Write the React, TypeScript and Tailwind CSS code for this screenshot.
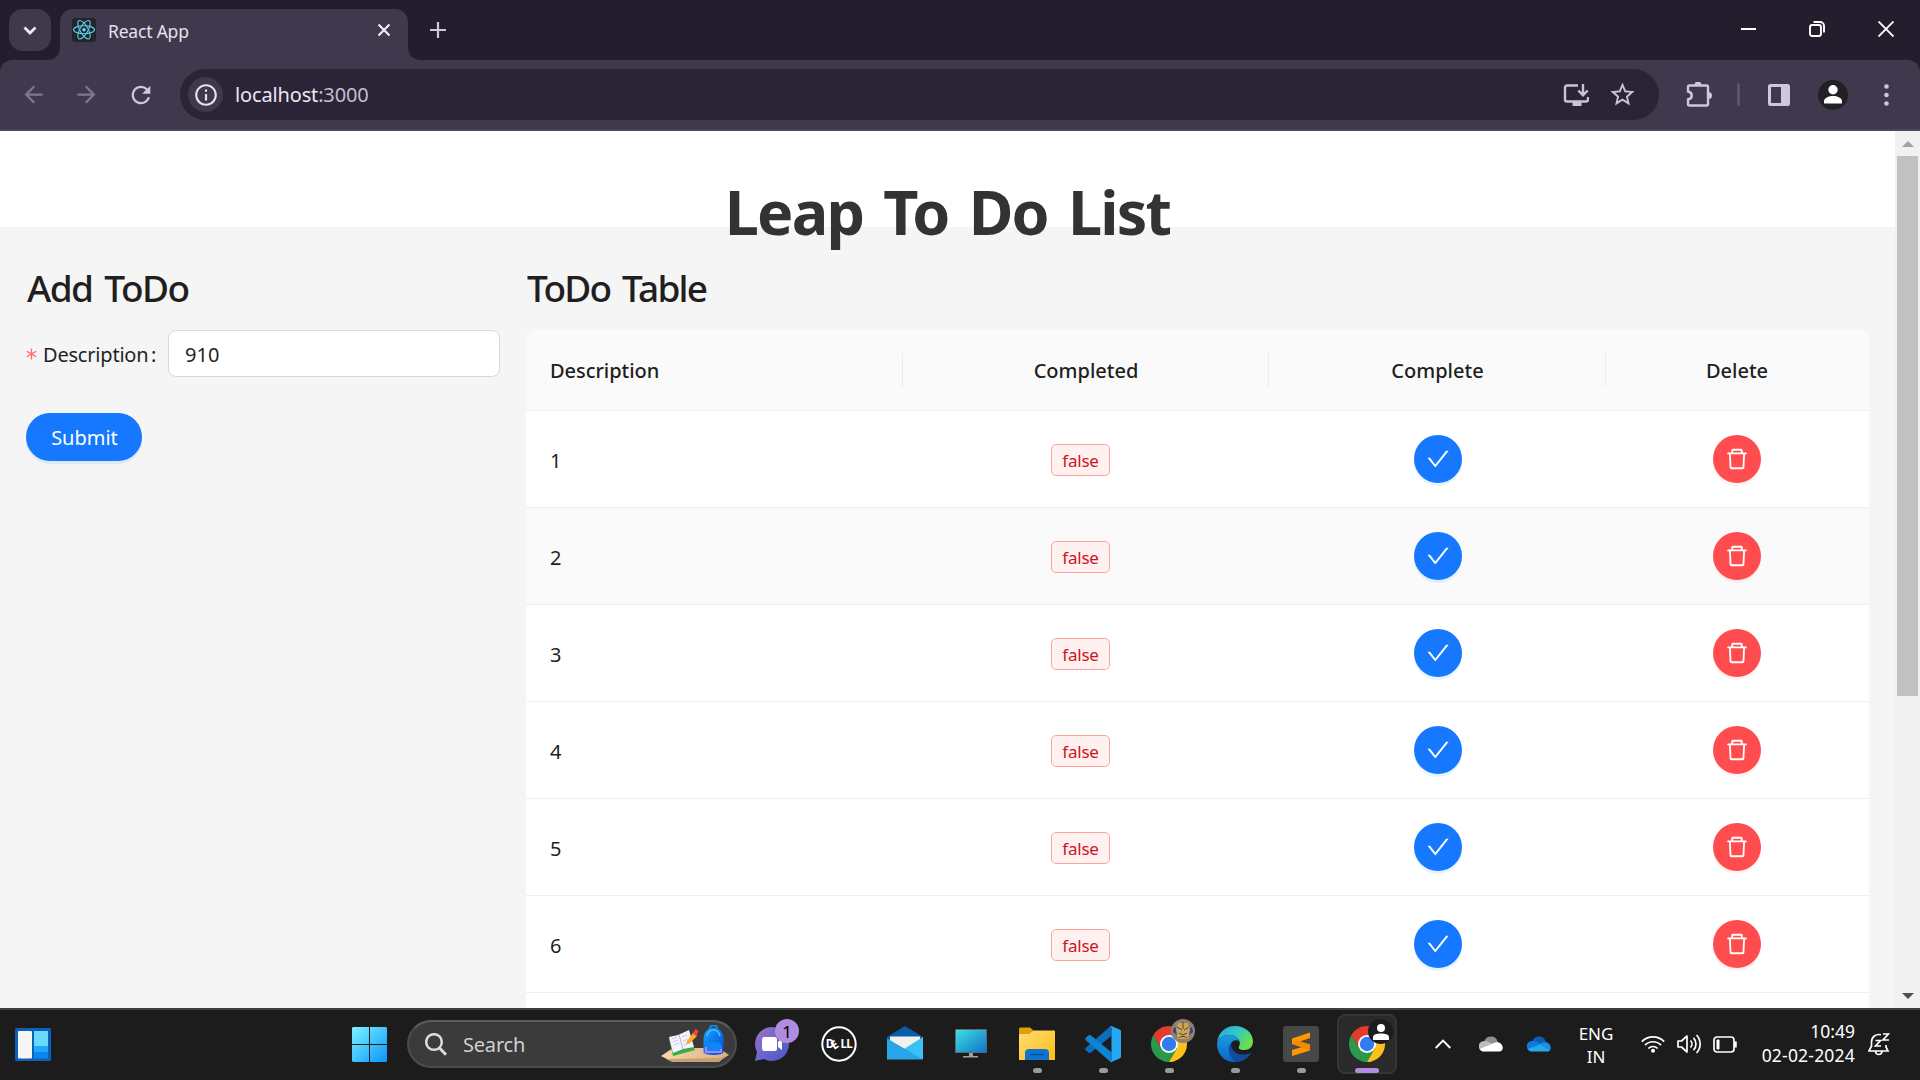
import type { ReactNode } from "react";
import { AiOutlineCheck, AiOutlineDelete } from "react-icons/ai";
import { MdArrowBack, MdArrowForward, MdInfoOutline, MdRefresh, MdStarBorder } from "react-icons/md";

const todos = ["1", "2", "3", "4", "5", "6"];

function TabStrip() {
  return (
    <div className="flex h-[60px] shrink-0 items-start bg-[#241d2e] pl-[9px] pt-[9px]">
      <div className="flex size-[42px] items-center justify-center rounded-[14px] bg-[#40384c]">
        <svg width="14" height="9" viewBox="0 0 14 9" fill="none" stroke="#eee8f4" strokeWidth="2.8">
          <path d="M1.5 1.5 7 7l5.500-5.500" />
        </svg>
      </div>
      <div className="relative ml-[9px] flex h-[51px] w-[348px] items-center rounded-t-[13px] bg-[#40384c] pb-[9px] pl-3 pr-[17px]">
        <svg className="absolute -left-[13px] bottom-0" width="13" height="13" viewBox="0 0 13 13">
          <path d="M13 0v13H0C8 13 13 8 13 0Z" fill="#40384c" />
        </svg>
        <svg className="absolute -right-[13px] bottom-0" width="13" height="13" viewBox="0 0 13 13">
          <path d="M0 0v13h13C5 13 0 8 0 0Z" fill="#40384c" />
        </svg>
        <svg width="24" height="24" viewBox="0 0 24 24" fill="none" stroke="#5ccfee" strokeWidth="1.100">
          <rect width="24" height="24" rx="3" fill="#22262b" stroke="none" />
          <circle cx="12" cy="11.700" r="1.800" fill="#61dafb" stroke="none" />
          <ellipse cx="12" cy="11.700" rx="10.400" ry="4" />
          <ellipse cx="12" cy="11.700" rx="10.400" ry="4" transform="rotate(60 12 11.700)" />
          <ellipse cx="12" cy="11.700" rx="10.400" ry="4" transform="rotate(120 12 11.700)" />
        </svg>
        <span className="ml-[12px] mt-[2px] flex-1 text-[17.5px] leading-6 tracking-[-0.2px] text-[#e6e0ec]">React App</span>
        <svg width="14" height="14" viewBox="0 0 14 14" stroke="#f0eaf5" strokeWidth="2.200">
          <path d="m1.500 1.500 11 11M12.500 1.500l-11 11" />
        </svg>
      </div>
      <svg className="ml-[22px] mt-[13px]" width="16" height="16" viewBox="0 0 16 16" stroke="#d2c5e0" strokeWidth="2.200">
        <path d="M8 0v16M0 8h16" />
      </svg>
      <div className="ml-auto flex items-center gap-[53px] pr-[26px] pt-[12px]">
        <div className="h-[2px] w-[15px] bg-white" />
        <svg width="16" height="16" viewBox="0 0 16 16" fill="none" stroke="#fff" strokeWidth="1.900">
          <rect x="1" y="4" width="11" height="11" rx="2.200" />
          <path d="M4.500 1h6.500a4 4 0 0 1 4 4v6.500" />
        </svg>
        <svg width="16" height="16" viewBox="0 0 16 16" stroke="#fff" strokeWidth="1.900">
          <path d="m.5.500 15 15M15.500.500l-15 15" />
        </svg>
      </div>
    </div>
  );
}

function Toolbar() {
  return (
    <div className="flex h-[71px] shrink-0 bg-[#241d2e]">
      <div className="flex flex-1 items-center rounded-t-[12px] border-b-2 border-[#4d4757] bg-[#40384c] pl-[20px]">
        <MdArrowBack className="size-[27px] text-[#7f778b]" />
        <MdArrowForward className="ml-[26px] size-[27px] text-[#7f778b]" />
        <MdRefresh className="ml-[27px] size-[28px] text-[#d2c5e0]" />
        <div className="ml-[25px] flex h-[51px] w-[1479px] items-center rounded-full bg-[#2b2436] pl-2 pr-[21px]">
          <div className="flex size-[35px] items-center justify-center rounded-full bg-[#40384c]">
            <MdInfoOutline className="size-[26px] text-[#e8e0ef]" />
          </div>
          <span className="ml-[12px] flex-1 text-[20px] leading-6 tracking-[-0.15px] text-[#ece6f2]">
            localhost<span className="text-[#c5bdcd]">:3000</span>
          </span>
          <svg width="26" height="22" viewBox="0 0 26 22" fill="none" stroke="#cbc3cf" strokeWidth="2.400">
            <path d="M15 1.500H4a2 2 0 0 0-2 2v12a2 2 0 0 0 2 2h19a2 2 0 0 0 2-2v-2.500M20 0v10.500M15.300 6.500l4.700 4.700 4.700-4.700" />
            <path d="M9.500 20h9" strokeWidth="4" />
          </svg>
          <MdStarBorder className="ml-[19px] mr-px size-[29px] text-[#cbc3cf]" />
        </div>
        <svg className="ml-[27px]" width="26" height="26" viewBox="0 0 26 26" fill="none" stroke="#d2c5e0" strokeWidth="2.400">
          <g transform="translate(0 -1)">
            <path d="M3.500 4.500h17a1.500 1.500 0 0 1 1.500 1.500v17a1.500 1.500 0 0 1-1.500 1.500h-17A1.500 1.500 0 0 1 2 23v-4.500c5-1 5-7 0-8V6a1.500 1.500 0 0 1 1.500-1.500Z" />
            <path d="M8.500 4a3.500 3.500 0 0 1 7 0ZM22.500 11a3.500 3.500 0 0 1 0 7Z" fill="#d2c5e0" stroke="none" />
          </g>
        </svg>
        <div className="ml-[25px] h-[23px] w-[3px] rounded-full bg-[#5c5469]" />
        <svg className="ml-[28px]" width="22" height="22" viewBox="0 0 22 22">
          <path fillRule="evenodd" fill="#d2c5e0" d="M2.500 0h17A2.500 2.500 0 0 1 22 2.500v17a2.500 2.500 0 0 1-2.500 2.500h-17A2.500 2.500 0 0 1 0 19.500v-17A2.500 2.500 0 0 1 2.500 0ZM3 3v16h10V3Z" />
        </svg>
        <div className="ml-[28px] flex size-[30px] items-center justify-center rounded-full bg-[#202124]">
          <svg width="18" height="19" viewBox="0 0 18 19" fill="#fff">
            <circle cx="9" cy="4.800" r="4.700" />
            <path d="M0 18.500v-2.500c0-3 5-5 9-5s9 2 9 5v2.500Z" />
          </svg>
        </div>
        <svg className="ml-[36px]" width="5" height="22" viewBox="0 0 5 22" fill="#d2c5e0">
          <circle cx="2.500" cy="2.500" r="2.300" />
          <circle cx="2.500" cy="11" r="2.300" />
          <circle cx="2.500" cy="19.500" r="2.300" />
        </svg>
      </div>
    </div>
  );
}

function AddTodo() {
  return (
    <section className="w-[474px] shrink-0">
      <h2 className="mb-[20px] pl-px text-[37px] font-medium leading-[45px] tracking-[-1.6px] [word-spacing:4px]">Add ToDo</h2>
      <div className="flex items-center">
        <svg className="mt-px" width="11" height="12" viewBox="0 0 11 12" stroke="#ff6b6d" strokeWidth="1.300">
          <path d="M5.500.500v11M.7 3.200l9.600 5.600M10.300 3.200.7 8.800" />
        </svg>
        <label className="ml-[6px] mt-[2px] w-[108px] text-[20px] leading-6 tracking-[-0.2px]">Description</label>
        <span className="mt-[2px] w-[17px] text-[20px] leading-6">:</span>
        <input
          defaultValue="910"
          className="h-[47px] w-0 flex-1 rounded-lg border border-[#d9d9d9] bg-white px-4 pt-[2px] text-[20px] leading-6 outline-none"
        />
      </div>
      <button className="mt-9 h-12 w-[116px] rounded-full bg-[#1677ff] pl-px pt-[2px] text-[20px] leading-6 text-white shadow-[0_3px_0_rgba(5,145,255,0.1)]">
        Submit
      </button>
    </section>
  );
}

function HeadCell({ children }: { children: ReactNode }) {
  return (
    <div className="flex items-center">
      <span className="flex-1 pl-px pt-[2px] text-center">{children}</span>
      <i className="h-[34px] w-px bg-[#ececec]" />
    </div>
  );
}

function TodoTable() {
  return (
    <section className="w-[1343px] shrink-0">
      <h2 className="mb-[19px] pl-px text-[37px] font-medium leading-[45px] tracking-[-1.8px] [word-spacing:4px]">ToDo Table</h2>
      <div className="overflow-hidden rounded-t-[10px] bg-white">
        <div className="grid h-[82px] grid-cols-[377px_366px_337px_262px] border-b border-[#f0f0f0] bg-[#fafafa] text-[20px] font-medium leading-6">
          <div className="flex items-center">
            <span className="flex-1 pl-6 pt-[2px] tracking-[-0.05px]">Description</span>
            <i className="h-[34px] w-px bg-[#ececec]" />
          </div>
          <HeadCell>Completed</HeadCell>
          <HeadCell>Complete</HeadCell>
          <span className="self-center pt-[2px] text-center">Delete</span>
        </div>
        {todos.map((todo, i) => (
          <div
            key={todo}
            className={
              "grid h-[97px] grid-cols-[377px_366px_337px_261px] items-center border-b border-[#f0f0f0] " +
              (i === 1 ? "bg-[#fafafa]" : "bg-white")
            }
          >
            <span className="pl-[24px] pt-[3px] text-[20px] leading-6">{todo}</span>
            <div className="flex justify-center pr-[11px] pt-[2px]">
              <span className="flex h-8 w-[59px] items-center justify-center rounded-[5px] border border-[#ffa39e] bg-[#fff1f0] pt-px text-[17px] leading-6 tracking-[-0.2px] text-[#cf1322]">
                false
              </span>
            </div>
            <div className="flex justify-center">
              <button className="flex size-12 items-center justify-center rounded-full bg-[#1677ff] text-white shadow-[0_3px_0_rgba(5,145,255,0.1)]">
                <AiOutlineCheck className="size-[26px]" />
              </button>
            </div>
            <div className="flex justify-center">
              <button className="flex size-12 items-center justify-center rounded-full bg-[#ff4d4f] text-white shadow-[0_3px_0_rgba(255,38,5,0.06)]">
                <AiOutlineDelete className="size-[26px]" />
              </button>
            </div>
          </div>
        ))}
        <div className="h-4 bg-white" />
      </div>
    </section>
  );
}

function Scrollbar() {
  return (
    <div className="flex w-[25px] shrink-0 flex-col items-center bg-[#f1f1f1] pb-[9px] pt-[10px]">
      <svg width="12" height="6" viewBox="0 0 12 6" fill="#a3a3a3">
        <path d="M6 0 12 6H0Z" />
      </svg>
      <div className="mt-[9px] h-[540px] w-[21px] bg-[#c1c1c1]" />
      <svg className="mt-auto" width="12" height="6" viewBox="0 0 12 6" fill="#505050">
        <path d="M6 6 12 0H0Z" />
      </svg>
    </div>
  );
}

function ChromeLogo() {
  return (
    <svg width="36" height="36" viewBox="0 0 48 48">
      <path d="M24 24 3.220 12A24 24 0 0 1 44.780 12H24Z" fill="#e33b2e" />
      <path d="M13.600 30 3.220 12A24 24 0 0 0 24 48l10.390-18Z" fill="#2a9a4a" />
      <path d="M24 12h20.780A24 24 0 0 1 24 48l10.390-18Z" fill="#fcc21b" />
      <path d="M24 13 3.220 12l10.380 18Z" fill="#e33b2e" />
      <circle cx="24" cy="24" r="12" fill="#fff" />
      <circle cx="24" cy="24" r="9.600" fill="#2f7bf0" />
    </svg>
  );
}

function TaskItem({ children, state }: { children: ReactNode; state?: "open" | "active" }) {
  return (
    <div className="flex w-[66px] items-center justify-center">
      <div
        className={
          "relative flex size-[60px] items-center justify-center rounded-lg " +
          (state === "active" ? "border-2 border-[#353535] bg-[#2a2a2a]" : "")
        }
      >
        {children}
        {state === "open" && <i className="absolute bottom-px left-[26px] h-[5px] w-[9px] rounded-full bg-[#9a9a9a]" />}
        {state === "active" && <i className="absolute -bottom-px left-[16px] h-[5px] w-6 rounded-full bg-[#b28ddf]" />}
      </div>
    </div>
  );
}

function SearchArt() {
  return (
    <svg width="68" height="38" viewBox="0 0 68 38">
      <defs>
        <linearGradient id="desk" x1="0" y1="0" x2="1" y2="0">
          <stop offset="0" stopColor="#f6d7ab" />
          <stop offset="1" stopColor="#d9b084" />
        </linearGradient>
        <linearGradient id="bag" x1="0" y1="0" x2="1" y2="1">
          <stop offset="0" stopColor="#18a5ff" />
          <stop offset="1" stopColor="#0547d8" />
        </linearGradient>
      </defs>
      <path d="M0 31 12 23h46l10 7-10 6H10Z" fill="url(#desk)" />
      <path d="m5 34 53-1 9-3-9 7H11Z" fill="#c9a072" />
      <path d="m8 14 20-6 6 17-22 6Z" fill="#38ad3f" />
      <path d="m8 12 9-2 11-5 5 17-11 2-10 4Z" fill="#f5f2ff" />
      <path d="m18 9.500 4 15" stroke="#a9a0c8" fill="none" strokeWidth=".8" />
      <path d="m11 14 5-2M12 17l5-2M13 20l5-2M21 12l5-2M22 16l5-2M23 20l6-2" stroke="#c4bcdc" fill="none" strokeWidth=".8" />
      <path d="M26 16 32 8l4 3-7 7-4 1Z" fill="#ffad1f" />
      <path d="m31.500 8.500 3-4.500 3 2-2 5Z" fill="#f04834" />
      <path d="M49 4c0-5 7-5 7 0" fill="none" stroke="#1687f5" strokeWidth="2" />
      <path d="M42.500 14c0-15 20-15 20 0v13c0 4-20 4-20 0Z" fill="url(#bag)" />
      <path d="M46 11c2-8 11-8 13 0" fill="none" stroke="#49c0ff" strokeWidth="1.500" />
      <path d="M45 22c0-7 16-7 16 0v5H45Z" fill="#0c86fa" />
      <path d="M45 22v5h15v-3" fill="none" stroke="#b77df5" strokeWidth="2" />
    </svg>
  );
}

function PinnedApps() {
  return (
    <div className="flex">
      <TaskItem>
        <div className="relative">
          <svg width="36" height="36" viewBox="0 0 36 36">
            <defs>
              <linearGradient id="chat" x1="0" y1="0" x2="1" y2="1">
                <stop stopColor="#a472bd" />
                <stop offset=".6" stopColor="#6264cf" />
                <stop offset="1" stopColor="#4b53bc" />
              </linearGradient>
            </defs>
            <path d="M17 1a17 17 0 1 1-8 32l-9 2 2-9A17 17 0 0 1 17 1Z" fill="url(#chat)" />
            <rect x="7" y="11" width="15" height="14" rx="2.500" fill="#fff" />
            <path d="m23 16 4-4v12l-4-3Z" fill="#fff" />
          </svg>
          <span className="absolute -right-[8px] -top-[7px] flex size-6 items-center justify-center rounded-full bg-[#b08ce0] text-[17px] leading-none text-black">1</span>
        </div>
      </TaskItem>
      <TaskItem>
        <svg width="36" height="36" viewBox="0 0 36 36">
          <circle cx="18" cy="18" r="16.700" fill="none" stroke="#fff" strokeWidth="2" />
          <text x="4.800 13.200 19.600 25.200" y="22.200 24 22.200 22.200" rotate="0 -35 0 0" fill="#fff" fontSize="11.500" fontWeight="700" fontFamily="Noto Sans, sans-serif">DELL</text>
        </svg>
      </TaskItem>
      <TaskItem>
        <svg width="36" height="36" viewBox="0 0 36 36">
          <path d="M0 11 18 0l18 11v10H0Z" fill="#0a5cab" />
          <path d="M3 10.500h30V15L18 25 3 15Z" fill="#f2f0ee" />
          <path d="M0 12.500 17 23 36 11v22H0Z" fill="#38c1f5" />
          <path d="M0 12.500 36 33.500H0Z" fill="#27a5e8" />
        </svg>
      </TaskItem>
      <TaskItem>
        <svg width="32" height="30" viewBox="0 0 32 30">
          <defs>
            <linearGradient id="screen" x1="0" y1="0" x2="1" y2="1">
              <stop stopColor="#3ee0e0" />
              <stop offset="1" stopColor="#1173c9" />
            </linearGradient>
          </defs>
          <rect width="32" height="24" rx="1" fill="#5e6a72" />
          <rect x="1" y="1" width="30" height="22" fill="url(#screen)" />
          <path d="M14 24h4v3h5v1.500H8V27h6Z" fill="#95a3ab" />
        </svg>
      </TaskItem>
      <TaskItem state="open">
        <svg width="36" height="34" viewBox="0 0 36 34">
          <defs>
            <linearGradient id="folder" x1="0" y1="0" x2="1" y2="1">
              <stop stopColor="#ffdd74" />
              <stop offset="1" stopColor="#fdbe13" />
            </linearGradient>
          </defs>
          <path d="M0 2a1.500 1.500 0 0 1 1.500-1.500H11L15 4v6H0Z" fill="#e09e0b" />
          <path d="M0 7h10l5-3.500h20a1 1 0 0 1 1 1V33H0Z" fill="url(#folder)" />
          <path d="M6 33V26a4 4 0 0 1 4-4h16a4 4 0 0 1 4 4v7Z" fill="#0f74cf" />
          <path d="M11 27.500h14" stroke="#0a4f9b" strokeWidth="1.500" />
        </svg>
      </TaskItem>
      <TaskItem state="open">
        <svg width="36" height="36" viewBox="0 0 36 36">
          <path d="M26.500 0v9.800L6 26.600a2 2 0 0 1-2.600 0l-2.500-2.300a1.700 1.700 0 0 1 0-2.500L25 .6Z" fill="#0a6ebd" />
          <path d="M26.500 36v-9.800L6 9.400a2 2 0 0 0-2.600 0L.9 11.700a1.700 1.700 0 0 0 0 2.500L25 35.400Z" fill="#0d85d0" />
          <path d="M26.500 0 35 3.800a1.800 1.800 0 0 1 1 1.700v25a1.800 1.800 0 0 1-1 1.700L26.500 36c-1 .2-1.600-.3-2-.8 1 .6 2 0 2-1.400V2.200c0-1.400-1-2-2-1.400.4-.5 1-1 2-.8Z" fill="#27a8f2" />
        </svg>
      </TaskItem>
      <TaskItem state="open">
        <div className="relative">
          <ChromeLogo />
          <svg className="absolute -right-[8px] -top-[7px]" width="24" height="24" viewBox="0 0 24 24">
            <circle cx="12" cy="12" r="12" fill="#8d8172" />
            <path d="m3 8 4 3-1 5-4-3ZM21 8l-4 3 1 5 4-3Z" fill="#2b4690" />
            <path d="M7 4h10l2 7-2 9H7L5 11Z" fill="#caa65a" />
            <path d="m6 8 5 3M18 8l-5 3M12 3v7M8 14l4 2 4-2M8 19c2-2 6-2 8 0" fill="none" stroke="#5b4225" strokeWidth="1" />
          </svg>
        </div>
      </TaskItem>
      <TaskItem state="open">
        <svg width="36" height="36" viewBox="0 0 36 36">
          <defs>
            <linearGradient id="edgeTop" x1="0" y1="0" x2="1" y2=".5">
              <stop stopColor="#27a4e4" />
              <stop offset=".55" stopColor="#32c8c4" />
              <stop offset="1" stopColor="#6be04c" />
            </linearGradient>
            <linearGradient id="edgeLeft" x1="0" y1="0" x2="0" y2="1">
              <stop stopColor="#1b9de2" />
              <stop offset="1" stopColor="#0b65c2" />
            </linearGradient>
          </defs>
          <path d="M0 17C1 6 9 0 18 0c10 0 18 7 18 15.500 0 5-3.500 8.500-9 8.500-4 0-6-1.500-5-3.500C25 15 20 9 12 9 6 9 1 12 0 17Z" fill="url(#edgeTop)" />
          <path d="M0 18C1 12 6 9 12 9c5 0 9 2.500 10 6-4-2-8 0-8.500 4.500C13 27 19 33 25 34c-3 1.500-5 2-8 2C7 36 0 28 0 18Z" fill="url(#edgeLeft)" />
          <path d="M14 17.500C10 21 11 31 19 36c7 0 12-4 14.500-8 .4-.8 0-1.200-.8-.8C25 31 14 27 14 17.500Z" fill="#114c9c" />
        </svg>
      </TaskItem>
      <TaskItem state="open">
        <div className="flex size-9 items-center justify-center rounded-[3px] bg-[#484848]">
          <svg width="18" height="24" viewBox="0 0 18 24">
            <path d="M0 6.500 18 .5V6L8 9.500l10 3v6L0 24v-6l10-3-10-3Z" fill="#ff9800" />
            <path d="m0 12 18 6.500V12.500L3 8Z" fill="#f28a00" />
          </svg>
        </div>
      </TaskItem>
      <TaskItem state="active">
        <div className="relative">
          <ChromeLogo />
          <div className="absolute -right-[8px] -top-[7px] flex size-[25px] items-center justify-center rounded-full bg-[#1b1c1e]">
            <svg width="16" height="16" viewBox="0 0 16 16" fill="#fff">
              <circle cx="8" cy="4" r="4" />
              <path d="M0 16v-3c0-2.500 4-3.500 8-3.500s8 1 8 3.500v3Z" />
            </svg>
          </div>
        </div>
      </TaskItem>
    </div>
  );
}

function SystemTray() {
  return (
    <div className="ml-[35px] flex items-center text-white">
      <svg width="16" height="10" viewBox="0 0 16 10" fill="none" stroke="#fff" strokeWidth="1.900">
        <path d="m.7 9 7.300-7.300L15.300 9" />
      </svg>
      <svg className="ml-7" width="24" height="16" viewBox="0 0 24 16">
        <path d="M5.500 5a7 7 0 0 1 13 0l1.500 5H6Z" fill="#8f8f8f" />
        <path d="M5 15.500A5 5 0 0 1 5 5c3-.5 6 1 12 5Z" fill="#bcbcbc" />
        <path d="M5 15.500c-2 0-3.500-1-4.300-2.500L15 7c1-.6 3-1.200 5-.6 5 2 5 9 0 9.100Z" fill="#fff" />
      </svg>
      <svg className="ml-6" width="24" height="16" viewBox="0 0 24 16">
        <path d="M5.500 5a7 7 0 0 1 13 0l1.500 5H6Z" fill="#0a5fb5" />
        <path d="M5 15.500A5 5 0 0 1 5 5c3-.5 6 1 12 5Z" fill="#0f7bd8" />
        <path d="M12 9l3-2c1-.6 3-1.200 5-.6 5 2 5 9 0 9.100Z" fill="#1a90e4" />
        <path d="M5 15.500c-2 0-3.500-1-4.300-2.500L13 8.500l9.500 6c-.8.7-1.500 1-2.500 1Z" fill="#28a8ea" />
      </svg>
      <div className="ml-[27px] w-9 pt-px text-center text-[17px] leading-[23px] tracking-[-0.1px]">
        <p>ENG</p>
        <p>IN</p>
      </div>
      <svg className="ml-[27px]" width="24" height="18" viewBox="0 0 24 18" fill="none" stroke="#fff" strokeWidth="1.700">
        <path d="M.8 6.700a15.500 15.500 0 0 1 22.400 0M4 10.200a11 11 0 0 1 16 0M7.300 13.500a6.500 6.500 0 0 1 9.400 0" />
        <circle cx="12" cy="15.700" r="2" fill="#fff" stroke="none" />
      </svg>
      <svg className="ml-3" width="25" height="20" viewBox="0 0 25 20" fill="none" stroke="#fff" strokeWidth="1.700" strokeLinejoin="round">
        <path d="M1 7v6h3.500L10 18V2L4.500 7ZM13.500 6.500a5 5 0 0 1 0 7M16.500 3.800a9 9 0 0 1 0 12.400M19.500 1a13 13 0 0 1 0 18" />
      </svg>
      <svg className="ml-[11px]" width="24" height="17" viewBox="0 0 24 17" fill="none" stroke="#fff" strokeWidth="1.700">
        <rect x="1" y="1" width="20" height="15" rx="3" />
        <path d="M22.500 5.500v6" strokeWidth="2.500" />
        <rect x="3.500" y="3.500" width="3" height="10" rx=".8" fill="#fff" stroke="none" />
      </svg>
      <div className="ml-[18px] w-[100px] pb-[2px] text-right text-[17.5px] leading-6">
        <p>10:49</p>
        <p className="tracking-[0.2px]">02-02-2024</p>
      </div>
      <svg className="ml-[13px]" width="22" height="23" viewBox="0 0 22 23" fill="none" stroke="#fff" strokeWidth="1.700">
        <path d="M13 1.800C8 .5 3.500 4 3.500 9v4L1 18h19l-2-4v-2M7.500 18.500c.5 4 6 4 6.500 0" />
        <path d="M7.500 7.500h5L7.500 13h5.500M15 1h5.500L15 7h6" />
      </svg>
    </div>
  );
}

function Taskbar() {
  return (
    <div className="flex h-[72px] shrink-0 items-center border-t-2 border-[#404040] bg-[#1c1c1c] pb-[2px] pl-[15px]">
      <svg width="36" height="33" viewBox="0 0 36 33">
        <rect width="36" height="33" rx="1.500" fill="#0b61b5" />
        <rect x="3" y="3" width="14" height="27.500" rx="1" fill="#f6f6f6" />
        <rect x="19" y="3" width="14" height="15" fill="#68d9ff" />
        <rect x="19" y="18" width="14" height="6" fill="#22a7fb" />
        <rect x="19" y="24" width="14" height="6.500" fill="#0a86ee" />
      </svg>
      <svg className="ml-[301px]" width="35" height="35" viewBox="0 0 35 35">
        <defs>
          <linearGradient id="win" x1="0" y1="0" x2="35" y2="35" gradientUnits="userSpaceOnUse">
            <stop stopColor="#7df3ff" />
            <stop offset="1" stopColor="#0a94fb" />
          </linearGradient>
        </defs>
        <path d="M1 0h16v17H0V1ZM18 0h16l1 1v16H18ZM0 18h17v17H1l-1-1ZM18 18h17v16l-1 1H18Z" fill="url(#win)" />
      </svg>
      <div className="ml-5 flex h-12 w-[330px] items-center rounded-full border-2 border-[#4c4c4c] border-t-[#5c5c5c] bg-[#3b3b3b] pl-4 pr-[6px]">
        <svg width="22" height="23" viewBox="0 0 22 23" fill="none" stroke="#d9dce0" strokeWidth="2.500">
          <circle cx="9" cy="9" r="7.800" />
          <path d="m14.500 15 6.500 6.800" strokeWidth="3" />
        </svg>
        <span className="ml-[16px] flex-1 pt-px text-[20px] leading-6 tracking-[-0.2px] text-[#d0d0d0]">Search</span>
        <SearchArt />
      </div>
      <div className="ml-[3px]">
        <PinnedApps />
      </div>
      <SystemTray />
    </div>
  );
}

export default function App() {
  return (
    <div className="flex h-[1080px] w-[1920px] flex-col overflow-hidden font-['Noto_Sans',sans-serif] text-[#1f1f1f]">
      <TabStrip />
      <Toolbar />
      <div className="flex min-h-0 flex-1">
        <main className="flex min-w-0 flex-1 flex-col overflow-hidden bg-[#f5f5f5]">
          <header className="relative z-10 h-24 shrink-0 bg-white text-center">
            <h1 className="pt-[21px] text-[61px] font-bold leading-[120px] tracking-[-1.8px] text-[#333] [word-spacing:6px]">Leap To Do List</h1>
          </header>
          <div className="flex gap-[26px] pl-[26px] pt-[38px]">
            <AddTodo />
            <TodoTable />
          </div>
        </main>
        <Scrollbar />
      </div>
      <Taskbar />
    </div>
  );
}
